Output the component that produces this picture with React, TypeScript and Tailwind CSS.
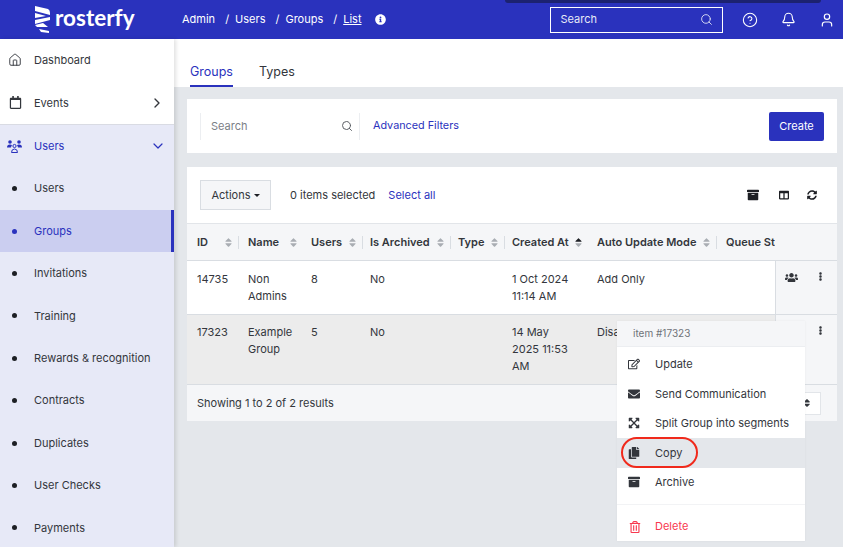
import { Bell, ChevronDown, ChevronRight, CircleHelp, House, Search, User } from 'lucide-react';
import {
  FaArchive,
  FaColumns,
  FaCopy,
  FaEllipsisV,
  FaEnvelope,
  FaExpandArrowsAlt,
  FaInfoCircle,
  FaRegCalendar,
  FaRegEdit,
  FaRegTrashAlt,
  FaSort,
  FaSortUp,
  FaSortDown,
  FaSyncAlt,
  FaUsers,
} from 'react-icons/fa';

const NAV_CHILDREN = ['Users', 'Groups', 'Invitations', 'Training', 'Rewards & recognition', 'Contracts', 'Duplicates', 'User Checks', 'Payments'];

const COLUMNS = [
  { label: 'ID', width: 'w-[51px]', iconGap: 'ml-[15px]', divider: true },
  { label: 'Name', width: 'w-[63px]', iconGap: 'ml-[9px]', divider: false },
  { label: 'Users', width: 'w-[59px]', iconGap: 'ml-[5px]', divider: true },
  { label: 'Is Archived', width: 'w-[88px]', iconGap: 'ml-[5px]', divider: true },
  { label: 'Type', width: 'w-[54px]', iconGap: 'ml-[5px]', divider: true },
  { label: 'Created At', width: 'w-[85px]', iconGap: 'ml-[5px]', divider: false, sorted: true },
  { label: 'Auto Update Mode', width: 'w-[129px]', iconGap: 'ml-[5px]', divider: true },
];

const CELLS = [
  'w-[51px] pr-[10px]',
  'w-[63px] pr-[10px]',
  'w-[59px] pr-[10px]',
  'w-[88px] pr-[10px]',
  'w-[54px] pr-[10px]',
  'w-[85px] pr-[24px]',
  'w-[129px] pr-[10px] whitespace-nowrap',
];

const ROWS = [
  { cells: ['14735', 'Non Admins', '8', 'No', '', '1 Oct 2024 11:14 AM', 'Add Only'], height: 'h-[54px] pt-[10px]', side: 'h-[54px]', bg: 'bg-white', icon: true },
  { cells: ['17323', 'Example Group', '5', 'No', '', '14 May 2025 11:53 AM', 'Disabled'], height: 'h-[70px] pt-[9px]', side: 'h-[70px]', bg: 'bg-[#ececec]', icon: false },
];

function Logo() {
  return (
    <svg width="17" height="27" viewBox="0 0 17 27" className="text-white" fill="currentColor">
      <path d="M1 0 L14 3 Q16 4 16 7 L16 9 L1 5 Z" />
      <path d="M1 7 L12 10 L1 12 Z" />
      <path d="M16 11 L16 14 L1 18 L1 14 Z" />
      <path d="M1 19 L9 17 L14 21 L3 21 Z" />
      <path d="M5 23 L15 25 L15 27 L7 26 Z" />
    </svg>
  );
}

function UsersNavIcon() {
  return (
    <svg width="15" height="13" viewBox="0 0 15 13" fill="currentColor">
      <circle cx="3" cy="2" r="1.8" />
      <circle cx="12" cy="2" r="1.8" />
      <path d="M0 7.5 Q0 4.5 3 4.5 Q4.5 4.5 5 5.5 Q4 6.5 4 7.5 Z" />
      <path d="M15 7.5 Q15 4.5 12 4.5 Q10.5 4.5 10 5.5 Q11 6.5 11 7.5 Z" />
      <circle cx="7.5" cy="6" r="1.6" fill="none" stroke="currentColor" strokeWidth="1" />
      <path d="M4.5 12.5 Q4.5 9 7.5 9 Q10.5 9 10.5 12.5 Z" fill="none" stroke="currentColor" strokeWidth="1" />
    </svg>
  );
}

function NavItem({ label, icon, right }: { label: string; icon: React.ReactNode; right?: React.ReactNode }) {
  return (
    <div className="h-[42.5px] flex items-center pl-[8px] pr-[9px] text-[#33363c]">
      <span className="w-[26px] flex-none flex">{icon}</span>
      <span className="text-[11px]">{label}</span>
      <span className="ml-auto">{right}</span>
    </div>
  );
}

function Sidebar() {
  return (
    <aside className="w-[174px] flex-none h-[508px] overflow-hidden bg-white shadow-[2px_0_4px_rgba(0,0,0,0.12)] z-10">
      <NavItem label="Dashboard" icon={<House size={14} strokeWidth={1.6} />} />
      <NavItem label="Events" icon={<FaRegCalendar size={13} className="ml-[1px]" />} right={<ChevronRight size={16} strokeWidth={2} />} />
      <div className="bg-[#e7e9f7] border-t border-[#d9dbe3]">
        <div className="h-[42.5px] flex items-center pl-[7px] pr-[8px] text-[#2a32bd]">
          <span className="w-[27px] flex-none flex"><UsersNavIcon /></span>
          <span className="text-[11px]">Users</span>
          <ChevronDown size={16} strokeWidth={1.8} className="ml-auto" />
        </div>
        {NAV_CHILDREN.map((item) => {
          const active = item === 'Groups';
          return (
            <div
              key={item}
              className={`h-[42.4px] flex items-center pl-[12px] ${active ? 'bg-[#cbcef0] text-[#2a32bd] border-r-[3px] border-[#2a32bd]' : 'text-[#33363c]'}`}
            >
              <span className={`w-[5px] h-[5px] rounded-full mr-[17px] ${active ? 'bg-[#2a32bd]' : 'bg-[#1d1f24]'}`} />
              <span className="text-[11px]">{item}</span>
            </div>
          );
        })}
      </div>
    </aside>
  );
}

function SortIcon({ sorted }: { sorted?: boolean }) {
  if (sorted) {
    return (
      <span className="relative w-[7px] h-[11px] flex-none">
        <FaSortUp size={11} className="absolute -left-[1px] top-0 text-[#1d1f24]" />
        <FaSortDown size={11} className="absolute -left-[1px] top-0 text-[#a9adb3]" />
      </span>
    );
  }
  return <FaSort size={11} className="text-[#a9adb3] flex-none" />;
}

function Table() {
  return (
    <div className="flex">
      <div className="w-[588px] flex-none overflow-hidden">
        {/* header */}
        <div className="h-[37px] w-[650px] flex items-center bg-[#f5f6f8] border-b border-[#d9dde2] pl-[10px] text-[11px] font-semibold text-[#33363c]">
          {COLUMNS.map((col) => (
            <div key={col.label} className={`${col.width} flex-none flex items-center whitespace-nowrap`}>
              <span>{col.label}</span>
              <span className={`${col.iconGap} flex`}><SortIcon sorted={col.sorted} /></span>
              {col.divider && <span className="ml-[4px] w-px h-[13px] bg-[#d9dde2]" />}
            </div>
          ))}
          <span>Queue Status</span>
        </div>
        {ROWS.map((row) => (
          <div key={row.cells[0]} className={`${row.height} ${row.bg} flex pl-[10px] border-b border-[#d9dde2] text-[11px] leading-[17px] text-[#33363c]`}>
            {row.cells.map((cell, i) => (
              <div key={i} className={`${CELLS[i]} flex-none`}>{cell}</div>
            ))}
          </div>
        ))}
      </div>
      <div className="flex-1 text-[#33363c]">
        <div className="h-[37px] bg-[#f5f6f8] border-b border-[#d9dde2]" />
        {ROWS.map((row) => (
          <div key={row.cells[0]} className={`${row.side} bg-[#f5f6f8] border-l border-b border-[#d9dde2] flex items-start pt-[10px] pl-[9px]`}>
            <span className="w-[13px]">{row.icon && <FaUsers size={13} />}</span>
            <FaEllipsisV size={9} className="ml-[18px] mt-[1px]" />
          </div>
        ))}
      </div>
    </div>
  );
}

function ContextMenu() {
  const items = [
    { label: 'Update', icon: <FaRegEdit size={12} /> },
    { label: 'Send Communication', icon: <FaEnvelope size={12} /> },
    { label: 'Split Group into segments', icon: <FaExpandArrowsAlt size={12} /> },
    { label: 'Copy', icon: <FaCopy size={12} />, active: true },
    { label: 'Archive', icon: <FaArchive size={12} /> },
  ];
  return (
    <div className="absolute left-[617px] top-[321px] w-[188px] bg-white shadow-[0_0_2px_rgba(0,0,0,0.06)] z-20 text-[11px] text-[#33363c]">
      <div className="h-[26px] bg-[#f5f6f8] border-b border-[#eceef1] flex items-center pl-[16px] text-[10px] text-[#6f7379]">item #17323</div>
      <div className="pt-[2.5px]">
        {items.map((item) => (
          <div key={item.label} className={`h-[29.5px] flex items-center pl-[11px] ${item.active ? 'bg-[#e4e7eb]' : ''}`}>
            <span className="w-[27px] flex-none flex">{item.icon}</span>
            <span>{item.label}</span>
          </div>
        ))}
      </div>
      <div className="mt-[7px] border-t border-[#f2f3f5] h-[37px] flex items-center pt-[7px] pl-[12px] text-[#f8394f]">
        <span className="w-[26px] flex-none flex"><FaRegTrashAlt size={12} /></span>
        <span>Delete</span>
      </div>
    </div>
  );
}

export default function App() {
  return (
    <div className="relative w-[843px] h-[547px] overflow-hidden bg-[#e4e7eb] font-['Inter',sans-serif] antialiased">
      <header className="h-[39px] bg-[#2a32bd] flex items-center text-white">
        <div className="w-[182px] flex-none flex items-center pl-[34px] gap-[4px]">
          <Logo />
          <span className="text-[22.5px] leading-none font-bold font-['Lato',sans-serif] -mt-[2px]">rosterfy</span>
        </div>
        <nav className="flex items-center text-[11px]">
          <span>Admin</span>
          <span className="ml-[10px] mr-[6px]">/</span>
          <span>Users</span>
          <span className="ml-[10px] mr-[6px]">/</span>
          <span>Groups</span>
          <span className="ml-[10px] mr-[6px]">/</span>
          <span className="underline">List</span>
          <FaInfoCircle size={11} className="ml-[13px]" />
        </nav>
        <div className="ml-auto w-[173px] h-[26px] border border-white flex items-center pl-[10px] pr-[9px] text-[11px] text-[#e7e9f7]">
          <span>Search</span>
          <Search size={13} strokeWidth={1.6} className="ml-auto" />
        </div>
        <div className="flex items-center gap-[23px] pl-[19px] pr-[8.5px]">
          <CircleHelp size={16} strokeWidth={1.6} />
          <Bell size={15} strokeWidth={1.8} />
          <User size={16} strokeWidth={1.8} />
        </div>
      </header>

      <div className="flex">
        <Sidebar />
        <main className="flex-1 min-w-0">
          <div className="h-[48px] bg-white flex items-end pl-[16px] gap-[26px] text-[12.5px]">
            <span className="h-[24px] text-[#2a32bd] border-b-[2px] border-[#2a32bd]">Groups</span>
            <span className="h-[24px] text-[#33363c]">Types</span>
          </div>
          <div className="pl-[13px] pr-[6px] pt-[12px] flex flex-col gap-[14px]">
            <section className="h-[54px] bg-white flex items-center pl-[13px] pr-[13px]">
              <div className="w-[160px] h-[27px] border-x border-[#eceef1] flex items-center pl-[10px] pr-[6px] text-[11px] text-[#7c8087]">
                <span>Search</span>
                <Search size={12} strokeWidth={2} className="ml-auto text-[#5c6066]" />
              </div>
              <span className="ml-[13px] text-[10.8px] text-[#2a32bd]">Advanced Filters</span>
              <button className="ml-auto w-[55px] h-[29px] bg-[#2a32bd] rounded-[2px] text-[11px] text-white">Create</button>
            </section>
            <section className="bg-white">
              <div className="h-[57px] flex items-center pl-[13px] pr-[20px] border-b border-[#e2e5e9] text-[11px] text-[#33363c]">
                <button className="w-[71px] h-[30px] bg-[#f5f6f8] border border-[#d9dde2] flex items-center justify-center gap-[3px]">
                  Actions
                  <span className="w-0 h-0 border-x-[3px] border-x-transparent border-t-[3px] border-t-[#1d1f24]" />
                </button>
                <span className="ml-[19px]">0 items selected</span>
                <span className="ml-[13px] text-[#2a32bd]">Select all</span>
                <div className="ml-auto flex items-center text-[#1d1f24] -mt-[1px]">
                  <FaArchive size={12} />
                  <FaColumns size={10} className="ml-[20px]" />
                  <FaSyncAlt size={10} className="ml-[18px]" />
                </div>
              </div>
              <Table />
              <div className="h-[36px] bg-[#f5f6f8] flex items-center pl-[10px] text-[11px] text-[#33363c]">
                <span>Showing 1 to 2 of 2 results</span>
                <div className="ml-auto mr-[16px] w-[30px] h-[23px] bg-white border border-[#e2e5e9] flex items-center justify-end pr-[8px]">
                  <FaSort size={10} />
                </div>
              </div>
            </section>
          </div>
        </main>
      </div>

      <ContextMenu />
      {/* red annotation around Copy */}
      <div className="absolute left-[621px] top-[437px] w-[77px] h-[31px] rounded-full border-2 border-[#f02a1c] z-30" />
      {/* edge of a window behind the header */}
      <div className="absolute left-[505px] top-0 w-[316px] h-[3px] bg-[#1c2270] rounded-b-[6px]" />
    </div>
  );
}
